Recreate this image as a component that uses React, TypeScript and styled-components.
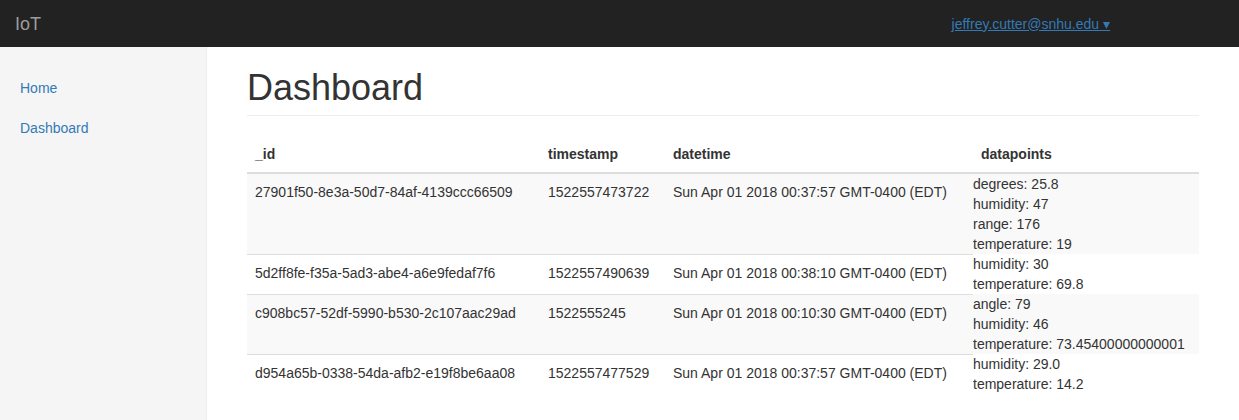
import React from "react";
import styled, { createGlobalStyle } from "styled-components";

const Global = createGlobalStyle`
  html, body { margin: 0; padding: 0; }
  body {
    font-family: "Liberation Sans", Arial, Helvetica, sans-serif;
    font-size: 14px;
    line-height: 20px;
    color: #333;
    background: #fff;
  }
  * { box-sizing: border-box; }
`;

const Page = styled.div`
  display: flex;
  flex-direction: column;
  min-height: 100vh;
`;

const Navbar = styled.header`
  height: 47px;
  background: #222;
  display: flex;
  align-items: center;
  padding: 0 15px;
`;

const Brand = styled.span`
  font-size: 18px;
  color: #9d9d9d;
  line-height: 20px;
`;

const UserLink = styled.a`
  margin-left: auto;
  margin-right: 114px;
  color: #337ab7;
  text-decoration: underline;
  font-size: 14px;
  line-height: 20px;
  cursor: pointer;
`;

const Body = styled.div`
  flex: 1;
  display: flex;
`;

const Sidebar = styled.nav`
  width: 207px;
  flex-shrink: 0;
  background: #f5f5f5;
  border-right: 1px solid #eee;
  padding-top: 21px;
`;

const NavItem = styled.a`
  display: block;
  padding: 10px 20px;
  color: #337ab7;
  text-decoration: none;
  line-height: 20px;
`;

const Main = styled.main`
  flex: 1;
  padding: 21px 40px 20px;
`;

const PageHeader = styled.h1`
  margin: 0 0 20px;
  padding-bottom: 7px;
  border-bottom: 1px solid #eee;
  font-size: 36px;
  font-weight: 500;
  line-height: 40px;
  color: #333;
`;

const Table = styled.table`
  width: 100%;
  border-collapse: separate;
  border-spacing: 0;
  table-layout: fixed;
`;

const Th = styled.th<{ $w: number }>`
  width: ${(p) => p.$w}px;
  text-align: left;
  font-weight: bold;
  padding: 8px;
  line-height: 20px;
  border-bottom: 2px solid #ddd;
  vertical-align: bottom;
`;

const Row = styled.tr`
  &:nth-child(odd) { background: #f9f9f9; }
`;

const Td = styled.td`
  padding: 8px;
  line-height: 20px;
  border-top: 1px solid #ddd;
  vertical-align: top;
  tr:first-child > & { border-top: none; }
`;

const PointsCell = styled.td`
  padding: 0;
  line-height: 20px;
  vertical-align: top;
`;

const Point = styled.div`
  line-height: 20px;
`;

type Rec = {
  id: string;
  ts: string;
  dt: string;
  points: string[];
};

const rows: Rec[] = [
  {
    id: "27901f50-8e3a-50d7-84af-4139ccc66509",
    ts: "1522557473722",
    dt: "Sun Apr 01 2018 00:37:57 GMT-0400 (EDT)",
    points: ["degrees: 25.8", "humidity: 47", "range: 176", "temperature: 19"],
  },
  {
    id: "5d2ff8fe-f35a-5ad3-abe4-a6e9fedaf7f6",
    ts: "1522557490639",
    dt: "Sun Apr 01 2018 00:38:10 GMT-0400 (EDT)",
    points: ["humidity: 30", "temperature: 69.8"],
  },
  {
    id: "c908bc57-52df-5990-b530-2c107aac29ad",
    ts: "1522555245",
    dt: "Sun Apr 01 2018 00:10:30 GMT-0400 (EDT)",
    points: ["angle: 79", "humidity: 46", "temperature: 73.45400000000001"],
  },
  {
    id: "d954a65b-0338-54da-afb2-e19f8be6aa08",
    ts: "1522557477529",
    dt: "Sun Apr 01 2018 00:37:57 GMT-0400 (EDT)",
    points: ["humidity: 29.0", "temperature: 14.2"],
  },
];

export default function App() {
  return (
    <Page>
      <Global />
      <Navbar>
        <Brand>IoT</Brand>
        <UserLink>jeffrey.cutter@snhu.edu ▾</UserLink>
      </Navbar>
      <Body>
        <Sidebar>
          <NavItem>Home</NavItem>
          <NavItem>Dashboard</NavItem>
        </Sidebar>
        <Main>
          <PageHeader>Dashboard</PageHeader>
          <Table>
            <thead>
              <tr>
                <Th $w={293}>_id</Th>
                <Th $w={125}>timestamp</Th>
                <Th $w={308}>datetime</Th>
                <Th $w={226}>datapoints</Th>
              </tr>
            </thead>
            <tbody>
              {rows.map((r) => (
                <Row key={r.id}>
                  <Td>{r.id}</Td>
                  <Td>{r.ts}</Td>
                  <Td>{r.dt}</Td>
                  <PointsCell>
                    {r.points.map((p) => (
                      <Point key={p}>{p}</Point>
                    ))}
                  </PointsCell>
                </Row>
              ))}
            </tbody>
          </Table>
        </Main>
      </Body>
    </Page>
  );
}
